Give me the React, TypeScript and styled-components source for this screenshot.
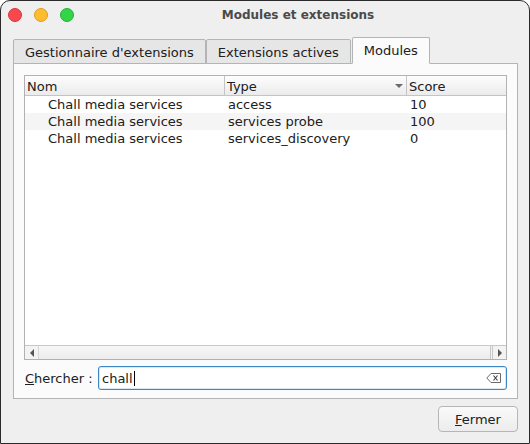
import { createGlobalStyle, styled } from "styled-components";

const GlobalStyle = createGlobalStyle`
  html, body {
    margin: 0;
    padding: 0;
    background: #ffffff;
  }
  * {
    box-sizing: border-box;
  }
`;

interface IModule {
  name: string;
  type: string;
  score: number;
}

const modules: IModule[] = [
  { name: "Chall media services", type: "access", score: 10 },
  { name: "Chall media services", type: "services probe", score: 100 },
  { name: "Chall media services", type: "services_discovery", score: 0 },
];

const tabs = ["Gestionnaire d'extensions", "Extensions actives", "Modules"];

const App = () => {
  return (
    <>
      <GlobalStyle />
      <Window>
        <TitleBar>
          <Lights>
            <Light color="#f7484e" edge="#d8353a" />
            <Light color="#fdbd2e" edge="#dc9d20" />
            <Light color="#33d448" edge="#23b134" />
          </Lights>
          <Title>Modules et extensions</Title>
        </TitleBar>

        <Body>
          <TabBar>
            {tabs.map((t, i) => (
              <Tab key={t} $active={i === 2}>
                {t}
              </Tab>
            ))}
          </TabBar>

          <Pane>
            <Tree>
              <Header>
                <HeaderCell $width={200}>Nom</HeaderCell>
                <HeaderCell $width={182}>
                  Type
                  <SortArrow />
                </HeaderCell>
                <HeaderCell $width={98} $last>
                  Score
                </HeaderCell>
              </Header>
              <Rows>
                {modules.map((m, i) => (
                  <Row key={m.type} $alt={i % 2 === 1}>
                    <Cell $width={200} $indent={23}>
                      {m.name}
                    </Cell>
                    <Cell $width={182}>{m.type}</Cell>
                    <Cell $width={98}>{m.score}</Cell>
                  </Row>
                ))}
              </Rows>
              <ScrollBar>
                <ScrollButton>
                  <svg width="6" height="8" viewBox="0 0 6 8">
                    <path d="M5 0 L1 4 L5 8 Z" fill="#555" />
                  </svg>
                </ScrollButton>
                <ScrollTrack />
                <ScrollButton $right>
                  <svg width="6" height="8" viewBox="0 0 6 8">
                    <path d="M1 0 L5 4 L1 8 Z" fill="#555" />
                  </svg>
                </ScrollButton>
              </ScrollBar>
            </Tree>

            <SearchRow>
              <Label>
                <u>C</u>hercher :
              </Label>
              <SearchBox>
                <SearchText>
                  chall
                  <Caret />
                </SearchText>
                <ClearIcon width="16" height="12" viewBox="0 0 16 12">
                  <path
                    d="M5 1.5 H14.5 V10.5 H5 L0.8 6 Z"
                    fill="none"
                    stroke="#6a6a6a"
                    strokeWidth="1"
                  />
                  <path
                    d="M7.5 3.5 L11.5 8.5 M11.5 3.5 L7.5 8.5"
                    stroke="#444"
                    strokeWidth="1.2"
                  />
                </ClearIcon>
              </SearchBox>
            </SearchRow>
          </Pane>

          <Footer>
            <Button>
              <u>F</u>ermer
            </Button>
          </Footer>
        </Body>
      </Window>
    </>
  );
};

export default App;

const Window = styled.div`
  width: 530px;
  height: 444px;
  border: 1px solid #2a2a2a;
  border-radius: 10px 10px 0 0;
  background: #efefef;
  display: flex;
  flex-direction: column;
  overflow: hidden;
  font-family: "DejaVu Sans", "Liberation Sans", sans-serif;
  font-size: 13px;
  color: #202020;
`;

const TitleBar = styled.div`
  height: 27px;
  display: flex;
  align-items: center;
  flex-shrink: 0;
`;

const Lights = styled.div`
  display: flex;
  column-gap: 12px;
  padding-left: 7px;
  width: 90px;
`;

const Light = styled.span<{ color: string; edge: string }>`
  width: 14px;
  height: 14px;
  border-radius: 50%;
  background: ${(p) => p.color};
  border: 1px solid ${(p) => p.edge};
`;

const Title = styled.div`
  flex: 1;
  text-align: center;
  font-weight: bold;
  font-size: 12px;
  color: #4a4a4a;
  padding-right: 24px;
`;

const Body = styled.div`
  flex: 1;
  display: flex;
  flex-direction: column;
  padding: 10px 11px 11px 12px;
`;

const TabBar = styled.div`
  display: flex;
  align-items: flex-end;
  height: 26px;
  position: relative;
  z-index: 1;
  margin-bottom: -1px;
`;

const Tab = styled.div<{ $active?: boolean }>`
  height: ${(p) => (p.$active ? "27px" : "25px")};
  padding: 0 ${(p) => (p.$active ? "11px" : "11px")};
  padding-top: ${(p) => (p.$active ? "0" : "1px")};
  display: flex;
  align-items: center;
  border: 1px solid #b4b4b4;
  border-bottom: ${(p) => (p.$active ? "1px solid #fbfbfb" : "1px solid #b4b4b4")};
  border-radius: 2px 2px 0 0;
  background: ${(p) => (p.$active ? "#fbfbfb" : "#e6e6e6")};
  margin-left: ${(p) => (p.$active ? "1px" : "0")};
  & + & {
    border-left: ${(p) => (p.$active ? "1px solid #b4b4b4" : "none")};
  }
`;

const Pane = styled.div`
  flex: 1;
  display: flex;
  flex-direction: column;
  border: 1px solid #b4b4b4;
  background: #fbfbfb;
  padding: 11px 10px 8px 10px;
`;

const Tree = styled.div`
  flex: 1;
  display: flex;
  flex-direction: column;
  border: 1px solid #b1b1b1;
  background: #ffffff;
`;

const Header = styled.div`
  display: flex;
  height: 20px;
  background: linear-gradient(#fdfdfd, #ebebeb);
  border-bottom: 1px solid #c4c4c4;
`;

const HeaderCell = styled.div<{ $width: number; $last?: boolean }>`
  width: ${(p) => p.$width}px;
  flex-shrink: 0;
  display: flex;
  align-items: center;
  padding-left: 2px;
  padding-top: 1px;
  border-right: ${(p) => (p.$last ? "none" : "1px solid #c4c4c4")};
  position: relative;
  ${(p) => (p.$last ? "flex: 1;" : "")}
`;

const SortArrow = styled.span`
  position: absolute;
  right: 3px;
  top: 8px;
  width: 0;
  height: 0;
  border-left: 4px solid transparent;
  border-right: 4px solid transparent;
  border-top: 4px solid #6a6a6a;
`;

const Rows = styled.div`
  flex: 1;
`;

const Row = styled.div<{ $alt?: boolean }>`
  display: flex;
  height: 17px;
  align-items: center;
  background: ${(p) => (p.$alt ? "#f5f5f5" : "#ffffff")};
`;

const Cell = styled.div<{ $width: number; $indent?: number }>`
  width: ${(p) => p.$width}px;
  flex-shrink: 0;
  padding-left: ${(p) => p.$indent ?? 3}px;
  white-space: nowrap;
`;

const ScrollBar = styled.div`
  display: flex;
  height: 14px;
  border-top: 1px solid #c8c8c8;
  background: #f3f3f3;
`;

const ScrollButton = styled.div<{ $right?: boolean }>`
  width: 14px;
  display: flex;
  align-items: center;
  justify-content: center;
  border-left: ${(p) => (p.$right ? "1px solid #c8c8c8" : "none")};
  border-right: ${(p) => (p.$right ? "none" : "1px solid #d6d6d6")};
`;

const ScrollTrack = styled.div`
  flex: 1;
  background: linear-gradient(#f7f7f7, #ececec);
  border-right: 1px solid #c8c8c8;
  margin-right: 1px;
`;

const SearchRow = styled.div`
  display: flex;
  align-items: center;
  margin-top: 6px;
  column-gap: 8px;
`;

const Label = styled.span`
  padding-left: 1px;
  width: 66px;
  white-space: nowrap;
`;

const SearchBox = styled.div`
  flex: 1;
  height: 24px;
  display: flex;
  align-items: center;
  justify-content: space-between;
  border: 1px solid #3b86c4;
  border-radius: 3px;
  background: #ffffff;
  padding: 0 4px 0 3px;
  box-shadow: inset 0 0 0 1px #d8e8f5;
`;

const SearchText = styled.span`
  display: flex;
  align-items: center;
`;

const Caret = styled.span`
  width: 1px;
  height: 15px;
  background: #000;
  margin-left: 1px;
`;

const ClearIcon = styled.svg`
  display: block;
`;

const Footer = styled.div`
  display: flex;
  justify-content: flex-end;
  padding-top: 7px;
`;

const Button = styled.button`
  width: 80px;
  height: 26px;
  font-family: inherit;
  font-size: 13px;
  color: #202020;
  border: 1px solid #b6b6b6;
  border-radius: 4px;
  background: linear-gradient(#fafafa, #ececec);
  padding: 0;
`;
